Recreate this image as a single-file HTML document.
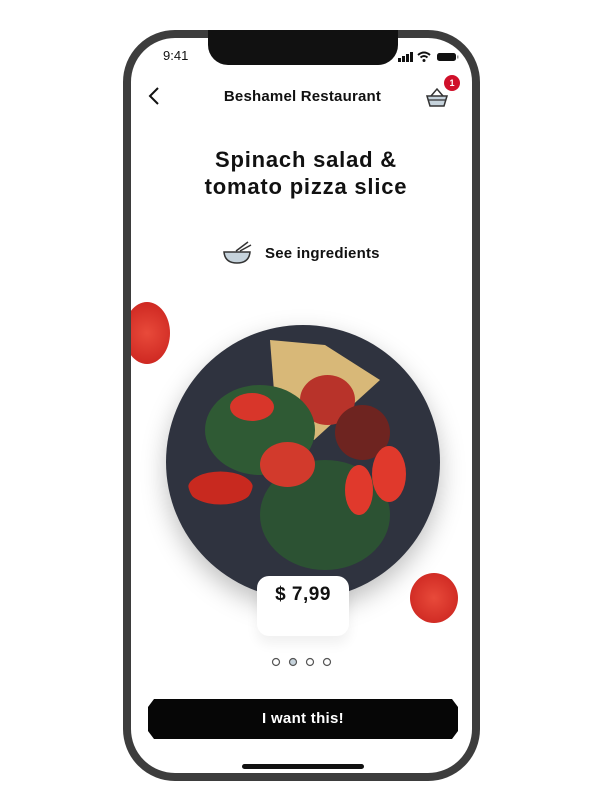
<!DOCTYPE html>
<html><head><style>
*{margin:0;padding:0;box-sizing:border-box}
body{width:600px;height:800px;background:#fff;position:relative;overflow:hidden;font-family:"Liberation Sans",sans-serif}
.phone{position:absolute;left:123px;top:30px;width:357px;height:751px;border:8px solid #3d3d3d;border-radius:52px;overflow:hidden;z-index:5;pointer-events:none}
.bg{position:absolute;left:123px;top:30px;width:357px;height:751px;border-radius:52px;background:#fff}
.notch{position:absolute;left:208px;top:30px;width:190px;height:35px;background:#111;border-radius:0 0 20px 20px;z-index:6}
.abs{position:absolute}
.b{font-weight:bold;color:#111}
</style></head><body>
<div class="bg"></div>
<div class="notch"></div>
<div class="abs" style="left:163px;top:48px;font-size:13px;color:#111">9:41</div>
<svg class="abs" style="left:398px;top:51px" width="62" height="12">
<rect x="0" y="7" width="3" height="4" fill="#111"/><rect x="4" y="5" width="3" height="6" fill="#111"/><rect x="8" y="3" width="3" height="8" fill="#111"/><rect x="12" y="1" width="3" height="10" fill="#111"/>
<path d="M20 4 Q26 -1 32 4" stroke="#111" stroke-width="2" fill="none"/><path d="M22.5 6.5 Q26 3.5 29.5 6.5" stroke="#111" stroke-width="2" fill="none"/><circle cx="26" cy="9.5" r="1.5" fill="#111"/>
<rect x="39" y="2" width="19" height="8" rx="2.5" fill="#111"/><rect x="59" y="4.5" width="1.5" height="3" fill="#999"/>
</svg>
<svg class="abs" style="left:146px;top:86px" width="16" height="20"><path d="M12 2 L4 10 L12 18" stroke="#111" stroke-width="2" fill="none"/></svg>
<div class="abs b" style="left:0;width:605px;text-align:center;top:88px;font-size:15px;letter-spacing:0.2px">Beshamel Restaurant</div>
<svg class="abs" style="left:424px;top:84px" width="26" height="24"><path d="M3 12 H23 L20 22 H6 Z" fill="#c6d3dc" stroke="#333" stroke-width="1.5"/><path d="M7 12 L13 5 L19 12" stroke="#333" stroke-width="1.5" fill="none"/><line x1="4" y1="16" x2="22" y2="16" stroke="#333" stroke-width="1.2"/></svg>
<div class="abs" style="left:444px;top:75px;width:16px;height:16px;border-radius:50%;background:#d0102a;color:#fff;font-size:9px;font-weight:bold;text-align:center;line-height:16px">1</div>
<div class="abs b" style="left:0;width:612px;text-align:center;top:146px;font-size:22px;line-height:27px;letter-spacing:0.8px">Spinach salad &amp;<br>tomato pizza slice</div>
<svg class="abs" style="left:222px;top:240px" width="32" height="26"><path d="M2 12 H28 Q27 23 15 23 Q3 23 2 12Z" fill="#c6d3dc" stroke="#333" stroke-width="1.5"/><path d="M14 11 L26 2 M18 11 L29 5" stroke="#333" stroke-width="1.5"/></svg>
<div class="abs b" style="left:265px;top:245px;font-size:15px;letter-spacing:0.2px">See ingredients</div>
<div class="abs" style="left:124px;top:302px;width:46px;height:62px;border-radius:50%;background:radial-gradient(circle,#e84a3a,#c8201c)"></div>
<div class="abs" style="left:166px;top:325px;width:274px;height:274px;border-radius:50%;background:#2f333f;box-shadow:0 10px 25px rgba(0,0,0,.25)"></div>
<div class="abs" style="left:270px;top:340px;width:110px;height:100px;background:#d8b878;clip-path:polygon(0 0,50% 5%,100% 40%,40% 100%,5% 70%)"></div>
<div class="abs" style="left:300px;top:375px;width:55px;height:50px;border-radius:50%;background:#b8332a"></div>
<div class="abs" style="left:335px;top:405px;width:55px;height:55px;border-radius:50%;background:#6e2420"></div>
<div class="abs" style="left:205px;top:385px;width:110px;height:90px;border-radius:50%;background:#2f5a34"></div>
<div class="abs" style="left:260px;top:460px;width:130px;height:110px;border-radius:50%;background:#2c5233"></div>
<div class="abs" style="left:230px;top:393px;width:44px;height:28px;border-radius:50%;background:#d8362a"></div>
<div class="abs" style="left:188px;top:455px;width:65px;height:55px;border-radius:50%;background:#c8291f;clip-path:ellipse(50% 30% at 50% 60%)"></div>
<div class="abs" style="left:260px;top:442px;width:55px;height:45px;border-radius:50%;background:#d23a2c"></div>
<div class="abs" style="left:345px;top:465px;width:28px;height:50px;border-radius:50%;background:#e0392c"></div>
<div class="abs" style="left:372px;top:446px;width:34px;height:56px;border-radius:50%;background:#e0392c"></div>
<div class="abs" style="left:257px;top:576px;width:92px;height:60px;border-radius:12px;background:#fff;box-shadow:0 8px 12px rgba(0,0,0,.06)"></div>
<div class="abs b" style="left:257px;width:92px;text-align:center;top:584px;font-size:19px;letter-spacing:0.5px">$ 7,99</div>
<div class="abs" style="left:410px;top:573px;width:48px;height:50px;border-radius:50%;background:radial-gradient(circle,#e84a3a,#c8201c)"></div>
<svg class="abs" style="left:270px;top:656px" width="65" height="12"><g stroke="#555" stroke-width="1.2"><circle cx="6" cy="6" r="3.5" fill="#fff"/><circle cx="23" cy="6" r="3.5" fill="#c6d3dc"/><circle cx="40" cy="6" r="3.5" fill="#fff"/><circle cx="57" cy="6" r="3.5" fill="#fff"/></g></svg>
<div class="abs" style="left:148px;top:699px;width:310px;height:40px;background:#060606;clip-path:polygon(6px 0,calc(100% - 6px) 0,100% 8px,100% calc(100% - 8px),calc(100% - 6px) 100%,6px 100%,0 calc(100% - 8px),0 8px);color:#fff;font-weight:bold;font-size:15px;text-align:center;line-height:40px;letter-spacing:0.3px">I want this!</div>
<div class="abs" style="left:242px;top:764px;width:122px;height:5px;border-radius:3px;background:#111"></div>
<div class="phone"></div>
</body></html>
